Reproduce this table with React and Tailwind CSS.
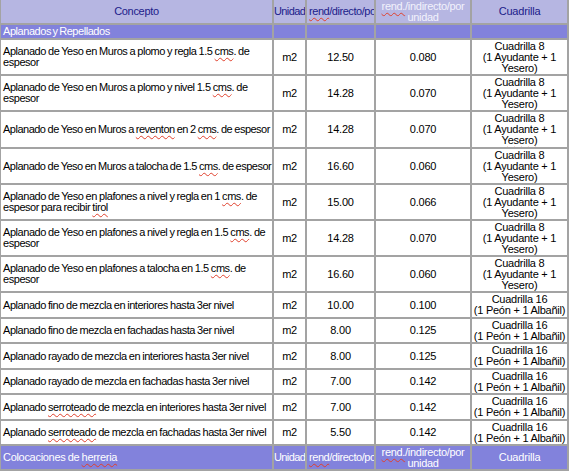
import React from 'react';

const Sq = ({ children }) => (
  <span className="underline decoration-wavy decoration-[#e0402c] decoration-1 underline-offset-[2px]">{children}</span>
);

const C8 = (
  <>
    Cuadrilla 8
    <br />
    (1 Ayudante + 1
    <br />
    <Sq>Yesero)</Sq>
  </>
);

const C16 = (
  <>
    Cuadrilla 16
    <br />
    (1 Peón + 1 Albañil)
  </>
);

const rows = [
  {
    h: 'h-[34px]',
    concepto: (
      <>
        Aplanado de Yeso en Muros a plomo y regla 1.5 <Sq>cms</Sq>. de
        <br />
        espesor
      </>
    ),
    dir: '12.50',
    ind: '0.080',
    cuad: C8,
  },
  {
    h: 'h-[34px]',
    concepto: (
      <>
        Aplanado de Yeso en Muros a plomo y nivel 1.5 <Sq>cms</Sq>. de
        <br />
        espesor
      </>
    ),
    dir: '14.28',
    ind: '0.070',
    cuad: C8,
  },
  {
    h: 'h-[35px]',
    t: 'tracking-[-0.5px]',
    concepto: (
      <>
        Aplanado de Yeso en Muros a <Sq>reventon</Sq> en 2 <Sq>cms</Sq>.  de espesor
      </>
    ),
    dir: '14.28',
    ind: '0.070',
    cuad: C8,
  },
  {
    h: 'h-[34px]',
    t: 'tracking-[-0.5px]',
    concepto: (
      <>
        Aplanado de Yeso en Muros a talocha de 1.5 <Sq>cms</Sq>.  de espesor
      </>
    ),
    dir: '16.60',
    ind: '0.060',
    cuad: C8,
  },
  {
    h: 'h-[34px]',
    concepto: (
      <>
        Aplanado de Yeso en plafones a nivel y regla en 1 <Sq>cms</Sq>. de
        <br />
        espesor para recibir <Sq>tirol</Sq>
      </>
    ),
    dir: '15.00',
    ind: '0.066',
    cuad: C8,
  },
  {
    h: 'h-[34px]',
    concepto: (
      <>
        Aplanado de Yeso en plafones a nivel y regla en 1.5 <Sq>cms</Sq>. de
        <br />
        espesor
      </>
    ),
    dir: '14.28',
    ind: '0.070',
    cuad: C8,
  },
  {
    h: 'h-[34px]',
    concepto: (
      <>
        Aplanado de Yeso en plafones a talocha  en 1.5 <Sq>cms</Sq>. de
        <br />
        espesor
      </>
    ),
    dir: '16.60',
    ind: '0.060',
    cuad: C8,
  },
  { h: 'h-[24px]', concepto: 'Aplanado fino de mezcla en interiores  hasta 3er nivel', dir: '10.00', ind: '0.100', cuad: C16 },
  { h: 'h-[23px]', concepto: 'Aplanado fino de mezcla en fachadas  hasta 3er nivel', dir: '8.00', ind: '0.125', cuad: C16 },
  { h: 'h-[24px]', concepto: 'Aplanado rayado de  mezcla en interiores  hasta 3er nivel', dir: '8.00', ind: '0.125', cuad: C16 },
  { h: 'h-[23px]', concepto: 'Aplanado rayado de  mezcla en fachadas  hasta 3er nivel', dir: '7.00', ind: '0.142', cuad: C16 },
  {
    h: 'h-[24px]',
    concepto: (
      <>
        Aplanado <Sq>serroteado</Sq> de  mezcla en interiores hasta 3er nivel
      </>
    ),
    dir: '7.00',
    ind: '0.142',
    cuad: C16,
  },
  {
    h: 'h-[23px]',
    concepto: (
      <>
        Aplanado <Sq>serroteado</Sq> de  mezcla en fachadas  hasta 3er nivel
      </>
    ),
    dir: '5.50',
    ind: '0.142',
    cuad: C16,
  },
];

const HeaderRow = ({ dark, title }) => {
  const bg = dark ? 'bg-[#8282dc] text-white' : 'bg-[#b6b6e2] text-[#20208a]';
  return (
    <>
      <div className={`h-[23px] flex items-center px-[2px] overflow-hidden whitespace-nowrap tracking-[-0.3px] ${bg} ${dark ? 'justify-start' : 'justify-center'}`}>
        {title}
      </div>
      <div className={`h-[23px] flex items-center overflow-hidden whitespace-nowrap tracking-[-0.6px] ${bg}`}>Unidad</div>
      <div className={`h-[23px] flex items-center px-[2px] overflow-hidden whitespace-nowrap ${bg}`}>
        <span>
          <Sq>rend</Sq>/directo/por unidad
        </span>
      </div>
      <div className={`h-[23px] flex items-center justify-center text-center overflow-hidden tracking-[-0.3px] ${dark ? 'bg-[#8282dc] text-white' : 'bg-[#b6b6e2] text-[#f2f2fc]'}`}>
        <span>
          <Sq>rend.</Sq>/indirecto/por
          <br />
          unidad
        </span>
      </div>
      <div className={`h-[23px] flex items-center justify-center overflow-hidden tracking-[-0.2px] ${bg}`}>Cuadrilla</div>
    </>
  );
};

export default function App() {
  return (
    <div className="w-[570px] h-[474px] overflow-hidden bg-white font-['Liberation_Sans',Arial,sans-serif] text-[11px] leading-[11px] tracking-[-0.45px]">
      <div className="-ml-px -mt-[2px] w-[570px] grid grid-cols-[271px_31px_67px_94px_95px] gap-[2px] p-[2px] bg-[#a3a3a3]">
        <HeaderRow title="Concepto" />

        {/* section title */}
        <div className="h-[13px] flex items-center px-[2px] bg-[#8282dc] text-white whitespace-nowrap [word-spacing:-1px]">
          Aplanados y Repellados
        </div>
        <div className="h-[13px] bg-[#8282dc]" />
        <div className="h-[13px] bg-[#8282dc]" />
        <div className="h-[13px] bg-[#8282dc]" />
        <div className="h-[13px] bg-[#8282dc]" />

        {rows.map((r, i) => (
          <React.Fragment key={i}>
            <div className={`${r.h} ${r.t || ''} flex items-center px-[2px] bg-white text-black whitespace-nowrap overflow-hidden [word-spacing:-0.5px]`}>
              <span>{r.concepto}</span>
            </div>
            <div className={`${r.h} flex items-center justify-center bg-white text-black tracking-[-0.3px]`}>m2</div>
            <div className={`${r.h} flex items-center justify-center bg-white text-black tracking-[-0.2px]`}>{r.dir}</div>
            <div className={`${r.h} flex items-center justify-center bg-white text-black tracking-[-0.2px]`}>{r.ind}</div>
            <div className={`${r.h} flex items-center justify-center text-center bg-white text-black whitespace-nowrap overflow-hidden tracking-[-0.25px]`}>
              <span>{r.cuad}</span>
            </div>
          </React.Fragment>
        ))}

        <HeaderRow
          dark
          title={
            <span className="[word-spacing:-0.5px]">
              Colocaciones de <Sq>herreria</Sq>
            </span>
          }
        />
      </div>
    </div>
  );
}
